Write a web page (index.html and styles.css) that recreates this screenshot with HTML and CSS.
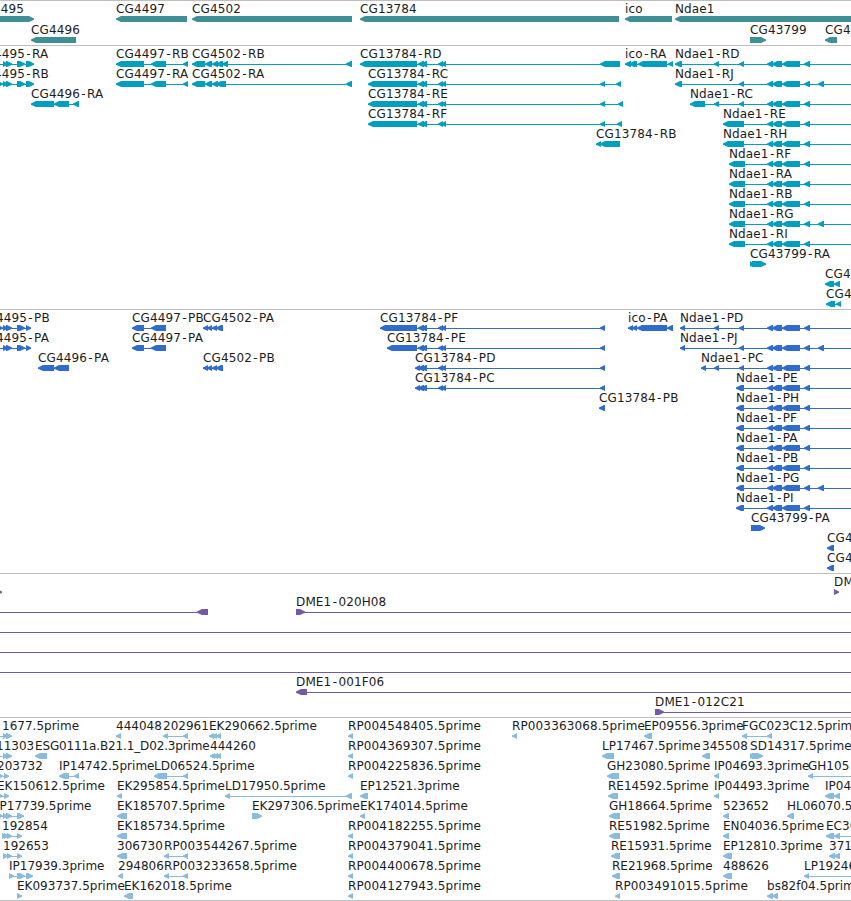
FILE: index.html
```
<!DOCTYPE html>
<html>
<head>
    <title>Genome tracks</title>
    <meta charset="utf-8">
    <link rel="stylesheet" href="styles.css">
</head>
<body>

    <!-- one section for each track, the rows are added by tracks.js -->
    <section class="track gene"       id="gene"></section>
    <section class="track transcript" id="transcript"></section>
    <section class="track protein"    id="protein"></section>
    <section class="track bac"        id="bac"></section>
    <section class="track est"        id="est"></section>

    <script src="tracks.js"></script>

</body>
</html>
```
FILE: styles.css
```
/* GLOBAL */
body    {   margin: 0;
            background-color: white;
            overflow: hidden;
        }

/* TRACKS: a stack of rows under a gray line */
.track          { border-top: 1px solid #bebebe; padding-bottom: 3px; overflow: hidden; }
.gene           { padding-bottom: 2px; }
.est            { padding-bottom: 2px; border-bottom: 1px solid #bebebe; }

.row            { display: block; width: 100%; height: 20px; overflow: visible; }
.gene .row      { height: 21px; }

/* LABELS */
.label          { font-family: "DejaVu Sans", Verdana, sans-serif;
                  font-size: 12px;
                  letter-spacing: 0.12px;
                  fill: #1c1c1c;
                  white-space: pre; }
.est .label     { letter-spacing: 0; }
.est .wide      { letter-spacing: 0.12px; }
.est .tight     { letter-spacing: -0.15px; }

/* FEATURES */
.gene .shape        { fill: #3f8f96; }
.transcript .shape  { fill: #009fbf; }
.protein .shape     { fill: #306bce; }
.bac .shape         { fill: #7558a8; }
.est .shape         { fill: #87bcde; }
```
FILE: tracks.js
```
var SVG = 'http://www.w3.org/2000/svg';

// block that closes the features that go on past the right side
var OFF = [870, 880];

// blocks shared by the transcripts of the same gene
var mid = [[418, 424], [421, 427], [438, 443], [441, 446]];
var nda = [[767, 773], [772, 782], [782, 800], [804, 810]];
var up  = [[818, 824]];

// feature: [label, label x, strand, blocks]
function f(label, x, strand, blocks) {
    return [label, x, strand, blocks];
}

// Ndae1 isoforms share everything but their left end
function ndae(name, x, left, extra) {
    return f('Ndae1-' + name, x, '-', left.concat(nda, extra || [], [OFF]));
}

// single block feature, left strand
function one(label, a, b) {
    return f(label, a, '-', [[a, b]]);
}

var data = {

    gene: [
        [f('CG4495', -25, '+', [[-30, 34]]), one('CG4497', 116, 187), one('CG4502', 192, 352),
         one('CG13784', 360, 619), one('ico', 625, 672), one('Ndae1', 675, 880)],
        [one('CG4496', 31, 76), f('CG43799', 750, '+', [[750, 766]]), one('CG4', 825, 837)]
    ],

    transcript: [
        [f('CG4495-RA', -24, '+', [[-20, -10], [3, 8], [6, 12], [17, 25], [26, 34]]),
         f('CG4497-RB', 116, '-', [[116, 144], [151, 166], [183, 188]]),
         f('CG4502-RB', 192, '-', [[192, 205], [205, 212], [212, 218], [216, 223], [222, 228], [346, 352]]),
         f('CG13784-RD', 360, '-', [[360, 417]].concat(mid, [[600, 620]])),
         f('ico-RA', 625, '-', [[625, 631], [629, 637], [638, 667], [668, 673]]),
         ndae('RD', 675, [[675, 682], [714, 719], [739, 744]])],
        [f('CG4495-RB', -24, '+', [[-4, 3], [3, 8], [6, 12], [17, 25], [26, 34]]),
         f('CG4497-RA', 116, '-', [[116, 144], [151, 166], [183, 188]]),
         f('CG4502-RA', 192, '-', [[192, 205], [205, 212], [212, 218], [216, 226], [346, 352]]),
         f('CG13784-RC', 368, '-', [[368, 417]].concat(mid, [[600, 605], [616, 621]])),
         ndae('RJ', 675, [[675, 682], [739, 744]], up)],
        [f('CG4496-RA', 31, '-', [[31, 54], [54, 69], [73, 79]]),
         f('CG13784-RE', 368, '-', [[368, 417]].concat(mid, [[600, 605], [618, 623]])),
         ndae('RC', 690, [[690, 705], [714, 719], [739, 744]])],
        [f('CG13784-RF', 368, '-', [[368, 417]].concat(mid, [[600, 605], [617, 622]])),
         ndae('RE', 723, [[723, 744]])],
        [f('CG13784-RB', 596, '-', [[596, 601], [600, 620]]),
         ndae('RH', 723, [[723, 744]])],
        [ndae('RF', 729, [[729, 745]])],
        [ndae('RA', 729, [[729, 745]])],
        [ndae('RB', 729, [[729, 745]])],
        [ndae('RG', 729, [[729, 745]], up)],
        [ndae('RI', 729, [[729, 745]])],
        [f('CG43799-RA', 750, '+', [[750, 754], [752, 766]])],
        [f('CG4', 825, '-', [[825, 834], [834, 840]])],
        [f('CG4', 826, '-', [[826, 835], [836, 841]])]
    ],

    protein: [
        [f('CG4495-PB', -22, '+', [[-3, 3], [3, 8], [6, 12], [17, 25], [26, 31]]),
         f('CG4497-PB', 132, '-', [[132, 144], [151, 166]]),
         f('CG4502-PA', 203, '-', [[203, 208], [207, 212], [212, 217], [216, 223]]),
         f('CG13784-PF', 380, '-', [[380, 417]].concat(mid, [[600, 605]])),
         f('ico-PA', 628, '-', [[628, 633], [632, 637], [637, 667], [667, 673]]),
         ndae('PD', 680, [[680, 685], [714, 719], [739, 744]])],
        [f('CG4495-PA', -22, '+', [[-20, -10], [3, 8], [6, 12], [17, 25], [26, 31]]),
         f('CG4497-PA', 132, '-', [[132, 144], [151, 166]]),
         f('CG13784-PE', 387, '-', [[387, 417]].concat(mid, [[600, 605]])),
         ndae('PJ', 680, [[680, 685], [739, 744]], up)],
        [f('CG4496-PA', 38, '-', [[38, 54], [54, 69]]),
         f('CG4502-PB', 203, '-', [[203, 208], [207, 212], [212, 217], [216, 223]]),
         f('CG13784-PD', 415, '-', [[415, 420]].concat(mid, [[600, 605]])),
         ndae('PC', 701, [[701, 706], [714, 719], [739, 744]])],
        [f('CG13784-PC', 415, '-', [[415, 420]].concat(mid, [[600, 605]])),
         ndae('PE', 736, [[736, 744]])],
        [one('CG13784-PB', 599, 605), ndae('PH', 736, [[736, 744]])],
        [ndae('PF', 736, [[736, 744]])],
        [ndae('PA', 736, [[736, 744]])],
        [ndae('PB', 736, [[736, 744]])],
        [ndae('PG', 736, [[736, 744]], up)],
        [ndae('PI', 736, [[736, 744]])],
        [f('CG43799-PA', 751, '+', [[751, 765]])],
        [one('CG4', 827, 834)],
        [one('CG4', 827, 834)]
    ],

    bac: [
        [f('', 0, '+', [[-3, 2]]), f('DM', 834, '+', [[834, 839]])],
        [f('', 0, '-', [[-30, -20], [197, 208]]), f('DME1-020H08', 296, '+', [[296, 305], OFF])],
        [f('', 0, '-', [[-30, -20], OFF])],
        [f('', 0, '-', [[-30, -20], OFF])],
        [f('', 0, '-', [[-30, -20], OFF])],
        [f('DME1-001F06', 296, '-', [[296, 307], OFF])],
        [f('DME1-012C21', 655, '+', [[655, 664], OFF])]
    ],

    est: [
        [f('1677.5prime', 2, '+', [[-20, -10], [3, 8], [6, 12]]),
         one('444048', 116, 121),
         f('202961', 163, '-', [[163, 168], [183, 188]]),
         f('EK290662.5prime', 209, '-', [[209, 214], [212, 217], [216, 221]]),
         one('RP004548405.5prime', 348, 353), one('RP003363068.5prime', 512, 517),
         one('EP09556.3prime', 644, 652),
         f('FGC023C12.5prime', 742, '-', [[742, 747], [767, 772]])],
        [f('11303', -4, '+', [[-20, -10], [3, 8], [6, 12]]),
         one('ESG0111a.B21.1_D02.3prime', 35, 47),
         f('444260', 210, '-', [[210, 215], [213, 218], [216, 221]]),
         one('RP004369307.5prime', 348, 353), one('LP17467.5prime', 602, 614),
         one('345508', 702, 710),
         f('SD14317.5prime', 750, '+', [[750, 755], [752, 763]])],
        [f('203732', -3, '+', [[-3, 3], [4, 9]]),
         f('IP14742.5prime', 59, '-', [[59, 69], [74, 79]]),
         f('LD06524.5prime', 154, '-', [[154, 167], [183, 188]]),
         one('RP004225836.5prime', 348, 353), one('GH23080.5prime', 607, 619),
         one('IP04693.3prime', 714, 719),
         f('GH105', 808, '-', [[808, 813], OFF])],
        [f('EK150612.5prime', -3, '+', [[-3, 3], [4, 9]]),
         one('EK295854.5prime', 117, 122),
         f('LD17950.5prime', 225, '-', [[225, 230], [346, 352]]),
         one('EP12521.3prime', 360, 368), one('RE14592.5prime', 608, 618),
         one('IP04493.3prime', 714, 719),
         f('IP04', 825, '-', [[825, 834], [834, 840]])],
        [f('IP17739.5prime', -4, '+', [[-3, 3], [3, 8], [6, 12], [17, 24]]),
         one('EK185707.5prime', 117, 127),
         f('EK297306.5prime', 252, '+', [[252, 262]]),
         one('EK174014.5prime', 360, 365), one('GH18664.5prime', 609, 620),
         one('523652', 723, 729), one('HL06070.5', 787, 794)],
        [f('192854', 2, '+', [[2, 7], [4, 9], [7, 12], [17, 22]]),
         one('EK185734.5prime', 117, 127), one('RP004182255.5prime', 348, 353),
         one('RE51982.5prime', 609, 620), one('EN04036.5prime', 723, 729),
         f('EC30', 826, '-', [[826, 834], [834, 840], OFF])],
        [f('192653', 3, '+', [[3, 8], [7, 12], [17, 22]]),
         one('306730', 117, 127),
         f('RP003544267.5prime', 164, '-', [[164, 169], [183, 188]]),
         one('RP004379041.5prime', 348, 353), one('RE15931.5prime', 611, 620),
         one('EP12810.3prime', 723, 732),
         f('371', 829, '-', [[829, 835], [834, 840]])],
        [f('IP17939.3prime', 9, '+', [[9, 14], [17, 25], [26, 33]]),
         one('294806', 118, 123),
         f('RP003233658.5prime', 164, '-', [[164, 169], [183, 188]]),
         one('RP004400678.5prime', 348, 353), one('RE21968.5prime', 612, 620),
         one('488626', 723, 732),
         f('LP19246', 804, '-', [[804, 809], OFF])],
        [f('EK093737.5prime', 17, '+', [[17, 22]]),
         one('EK162018.5prime', 124, 133), one('RP004127943.5prime', 348, 353),
         one('RP003491015.5prime', 615, 620),
         f('bs82f04.5prime', 767, '-', [[767, 773], [772, 778]])]
    ]
};

function add(parent, name, attrs) {
    var el = document.createElementNS(SVG, name);
    for (var k in attrs) el.setAttribute(k, attrs[k]);
    parent.appendChild(el);
    return el;
}

// a block with its arrow head, 5px long at most, with a blunt tip
function block(a, b, strand) {
    var h = Math.min(5, b - a);
    if (strand == '+')
        return 'M' + b + ' 17.5L' + (b - h) + ' 15H' + a + 'V21H' + (b - h) + 'L' + b + ' 18.8Z';
    return 'M' + a + ' 17.5L' + (a + h) + ' 15H' + b + 'V21H' + (a + h) + 'L' + a + ' 18.8Z';
}

function label_class(label) {
    if (label.length > 20) return 'label tight';
    if (label.indexOf('RP') == 0) return 'label wide';
    return 'label';
}

function draw_feature(row, feat) {
    var label = feat[0], strand = feat[2], blocks = feat[3];
    var first = blocks[0][0], last = blocks[blocks.length - 1][1];

    if (blocks.length > 1)
        add(row, 'rect', { 'class': 'shape', x: first, y: 18, width: last - first, height: 1 });

    blocks.forEach(function (b) {
        add(row, 'path', { 'class': 'shape', d: block(b[0], b[1], strand) });
    });

    if (!label) return;
    // some air at both sides of the hyphen
    var dx = label.split('').map(function (c, i) {
        return (c == '-' || label[i - 1] == '-') ? 1.3 : 0;
    });
    add(row, 'text', { 'class': label_class(label), x: feat[1], y: 12, dx: dx.join(' ') }).textContent = label;
}

for (var id in data) {
    data[id].forEach(function (feats) {
        var row = add(document.getElementById(id), 'svg', { 'class': 'row' });
        feats.forEach(function (feat) { draw_feature(row, feat); });
    });
}
```
